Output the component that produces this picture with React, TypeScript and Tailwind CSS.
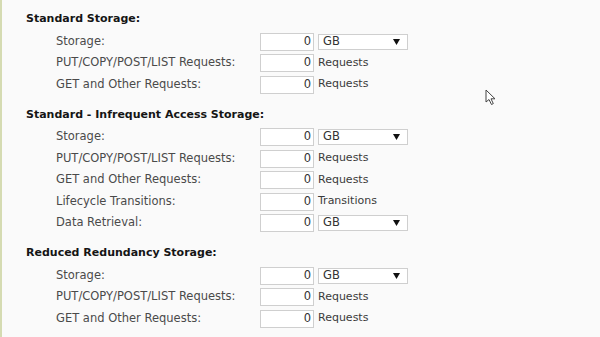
import { ReactNode } from "react";

type Row = { label: string; unit: "GB" | string };

const sections: { title: string; rows: Row[] }[] = [
  {
    title: "Standard Storage:",
    rows: [
      { label: "Storage:", unit: "GB" },
      { label: "PUT/COPY/POST/LIST Requests:", unit: "Requests" },
      { label: "GET and Other Requests:", unit: "Requests" },
    ],
  },
  {
    title: "Standard - Infrequent Access Storage:",
    rows: [
      { label: "Storage:", unit: "GB" },
      { label: "PUT/COPY/POST/LIST Requests:", unit: "Requests" },
      { label: "GET and Other Requests:", unit: "Requests" },
      { label: "Lifecycle Transitions:", unit: "Transitions" },
      { label: "Data Retrieval:", unit: "GB" },
    ],
  },
  {
    title: "Reduced Redundancy Storage:",
    rows: [
      { label: "Storage:", unit: "GB" },
      { label: "PUT/COPY/POST/LIST Requests:", unit: "Requests" },
      { label: "GET and Other Requests:", unit: "Requests" },
    ],
  },
];

const UnitSelect = () => (
  <div className="ml-[4px] flex h-[16px] w-[90px] items-center justify-between border border-[#cfcfcf] bg-white pl-[4px] pr-[7px] text-[11.5px] leading-none text-[#333]">
    <span>GB</span>
    <svg width="7" height="6" viewBox="0 0 7 6">
      <path d="M0 0 L7 0 L3.5 6 Z" fill="#111" />
    </svg>
  </div>
);

const FieldRow = ({ label, unit }: Row) => (
  <div className="flex h-[18px] items-center">
    <div className="w-[204px] text-[11.5px] text-[#4a4a4a]">{label}</div>
    <div className="flex h-[18px] w-[54px] items-center justify-end border border-[#cfcfcf] bg-white pr-[2px] text-[11.5px] text-[#333]">
      0
    </div>
    {unit === "GB" ? (
      <UnitSelect />
    ) : (
      <span className="ml-[4px] text-[11px] text-[#3a3a3a]">{unit}</span>
    )}
  </div>
);

const Section = ({ title, children }: { title: string; children: ReactNode }) => (
  <div className="mb-[13px]">
    <div className="h-[16px] text-[11px] font-bold leading-[16px] text-[#151515]">{title}</div>
    <div className="mt-[5.5px] flex flex-col gap-[3.5px] pl-[30px]">{children}</div>
  </div>
);

const Cursor = () => (
  <svg className="absolute left-[483px] top-[89px]" width="12" height="17" viewBox="0 0 12 17">
    <path
      d="M1 1 L1 13 L4 10.5 L6.5 15.5 L8.3 14.6 L6 9.8 L10 9.8 Z"
      fill="#fff"
      stroke="#444"
      strokeWidth="1"
      strokeLinejoin="round"
    />
  </svg>
);

export default function App() {
  return (
    <div
      className="relative h-[337px] w-[600px] overflow-hidden border-l-2 border-[#d5dbb2] bg-[#fafafa] pl-[24px] pt-[11px]"
      style={{ fontFamily: '"DejaVu Sans", Verdana, sans-serif' }}
    >
      {sections.map((s) => (
        <Section key={s.title} title={s.title}>
          {s.rows.map((r) => (
            <FieldRow key={r.label} label={r.label} unit={r.unit} />
          ))}
        </Section>
      ))}
      <div className="-ml-[18px] -mt-[7px] text-[11px] font-bold text-[#c4c4c4]">Data Transfer:</div>
      <Cursor />
    </div>
  );
}
